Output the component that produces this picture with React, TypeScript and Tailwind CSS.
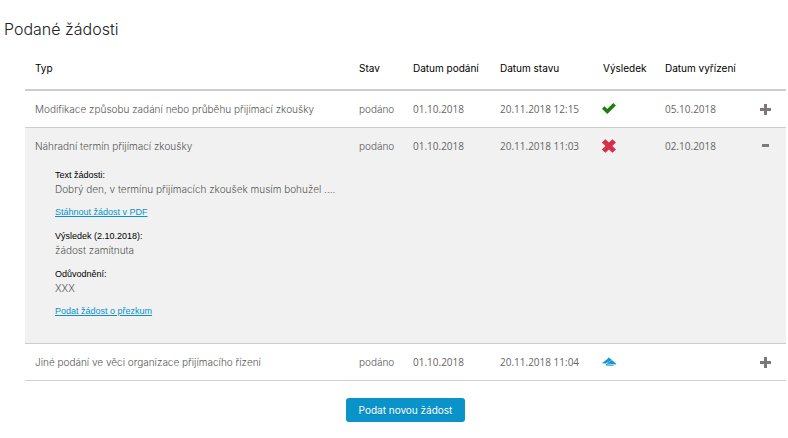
import React, { useState } from 'react';

type Result = 'approved' | 'rejected' | 'sent';

interface RequestRow {
  id: number;
  type: string;
  state: string;
  submitted: string;
  changed: string;
  result: Result;
  resolved?: string;
}

const requests: RequestRow[] = [
  { id: 1, type: 'Modifikace způsobu zadání nebo průběhu přijímací zkoušky', state: 'podáno', submitted: '01.10.2018', changed: '20.11.2018 12:15', result: 'approved', resolved: '05.10.2018' },
  { id: 2, type: 'Náhradní termín přijímací zkoušky', state: 'podáno', submitted: '01.10.2018', changed: '20.11.2018 11:03', result: 'rejected', resolved: '02.10.2018' },
  { id: 3, type: 'Jiné podání ve věci organizace přijímacího řízení', state: 'podáno', submitted: '01.10.2018', changed: '20.11.2018 11:04', result: 'sent' },
];

const ResultIcon: React.FC<{ result: Result }> = ({ result }) => {
  if (result === 'approved') {
    return (
      <svg width="16" height="14" viewBox="0 0 16 14" className="fill-[#1f7f0c]" role="img" aria-label="Schváleno">
        <path d="M1 6.8 3.5 4.3 6.2 6.9 12.3 1 14.9 3.5 6.3 12Z" />
      </svg>
    );
  }
  if (result === 'rejected') {
    return (
      <svg width="16" height="14" viewBox="0 0 16 14" className="fill-[#d72f49]" role="img" aria-label="Zamítnuto">
        <path d="M4.4.3 7.9 3.5 11.4.3 15 3.6 11.3 7 15 10.4 11.4 13.7 7.9 10.5 4.4 13.7.8 10.4 4.5 7 .8 3.6Z" />
      </svg>
    );
  }
  return (
    <svg width="16" height="14" viewBox="0 0 16 14" className="fill-[#1497cb]" role="img" aria-label="Odesláno">
      <path d="M.8 8.3 5.8 4.4 7.6 2.4 10.4 4.3 10.2 5.3 4.6 8.5Z" />
      <path d="M5.2 8.5 10.9 5.1 15.4 9 14.6 9.6Z" />
      <path d="M4.6 8.9 13.6 9.9 11.6 10.8 5 10.6Z" />
    </svg>
  );
};

const ToggleIcon: React.FC<{ open: boolean }> = ({ open }) => (
  <svg width="12" height="12" viewBox="0 0 12 12" className="fill-[#7d7878]">
    {open ? <path d="M3 4h7v3H3z" /> : <path d="M5 1h3v4h4v3H8v4H5V8H1V5h4z" />}
  </svg>
);

const Detail: React.FC = () => (
  <div className="flex flex-col items-start gap-2.5 pt-1 pb-[25px] pl-5 leading-[14px]">
    <div>
      <h3 className="font-['Liberation_Sans',Arial,sans-serif] text-[9px] font-normal leading-[14px] text-black">Text žádosti:</h3>
      <p>Dobrý den, v termínu přijímacích zkoušek musím bohužel ....</p>
    </div>
    <a href="#pdf" className="font-['Liberation_Sans',Arial,sans-serif] text-[9px] font-normal leading-[13px] text-[#0a93c9] underline">Stáhnout žádost v PDF</a>
    <div>
      <h3 className="font-['Liberation_Sans',Arial,sans-serif] text-[9px] font-normal leading-[14px] text-black">Výsledek (2.10.2018):</h3>
      <p>žádost zamítnuta</p>
    </div>
    <div>
      <h3 className="font-['Liberation_Sans',Arial,sans-serif] text-[9px] font-normal leading-[14px] text-black">Odůvodnění:</h3>
      <p>XXX</p>
    </div>
    <a href="#prezkum" className="font-['Liberation_Sans',Arial,sans-serif] text-[9px] font-normal leading-[13px] text-[#0a93c9] underline">Podat žádost o přezkum</a>
  </div>
);

export default function App() {
  const [openId, setOpenId] = useState<number | null>(2);

  return (
    <main className="min-h-screen bg-white pt-[17px] pr-0.5 pb-4 font-[Inter,'Liberation_Sans',sans-serif] text-[#555]">
      <h1 className="pl-1 text-base font-light leading-6 text-[#222]">Podané žádosti</h1>
      <div className="pl-[25px]">
        <table className="w-full table-fixed border-collapse text-left text-[10px] font-light leading-4">
          <colgroup>
            <col />
            <col className="w-[54px]" />
            <col className="w-[87px]" />
            <col className="w-[103px]" />
            <col className="w-[62px]" />
            <col className="w-[87px]" />
            <col className="w-11" />
          </colgroup>
          <thead>
            <tr className="h-[49px] border-b-2 border-[#cdcdcd] whitespace-nowrap text-black">
              <th scope="col" className="px-2.5 pt-1.5 font-normal">Typ</th>
              <th scope="col" className="px-2.5 pt-1.5 font-normal">Stav</th>
              <th scope="col" className="px-2.5 pt-1.5 font-normal">Datum podání</th>
              <th scope="col" className="px-2.5 pt-1.5 font-normal">Datum stavu</th>
              <th scope="col" className="px-2.5 pt-1.5 font-normal">Výsledek</th>
              <th scope="col" className="px-2.5 pt-1.5 font-normal">Datum vyřízení</th>
              <td />
            </tr>
          </thead>
          {requests.map(req => {
            const open = req.id === openId;
            return (
              <tbody key={req.id} className={open ? 'border-b border-[#cdcdcd] bg-[#f1f1f1]' : 'border-b border-[#cdcdcd]'}>
                <tr className="h-[37px] whitespace-nowrap">
                  <td className="px-2.5">{req.type}</td>
                  <td className="px-2.5">{req.state}</td>
                  <td className="px-2.5 font-['Open_Sans',sans-serif] font-normal text-[#666]">{req.submitted}</td>
                  <td className="px-2.5 font-['Open_Sans',sans-serif] font-normal text-[#666]">{req.changed}</td>
                  <td className="px-2"><ResultIcon result={req.result} /></td>
                  <td className="px-2.5 font-['Open_Sans',sans-serif] font-normal text-[#666]">{req.resolved}</td>
                  <td className="pl-[17px]">
                    <button
                      type="button"
                      className="block cursor-pointer"
                      aria-expanded={open}
                      aria-label={open ? 'Skrýt detail' : 'Zobrazit detail'}
                      onClick={() => setOpenId(open ? null : req.id)}
                    >
                      <ToggleIcon open={open} />
                    </button>
                  </td>
                </tr>
                {open && (
                  <tr>
                    <td colSpan={7} className="px-2.5"><Detail /></td>
                  </tr>
                )}
              </tbody>
            );
          })}
        </table>
        <div className="mt-[17px] flex justify-center">
          <button type="button" className="h-6 cursor-pointer rounded-[3px] bg-[#0a93c9] px-[13px] text-[10px] leading-4 text-white text-shadow-2xs">
            Podat novou žádost
          </button>
        </div>
      </div>
    </main>
  );
}
